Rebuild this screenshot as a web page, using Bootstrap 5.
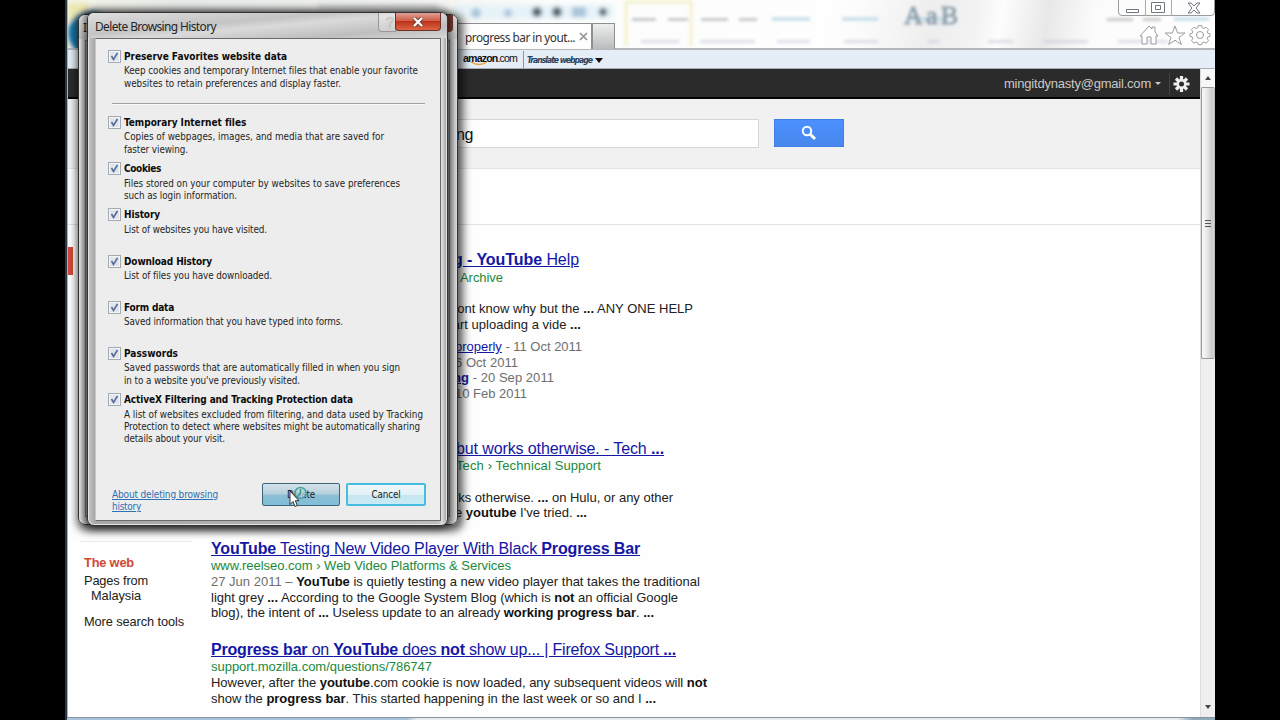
<!DOCTYPE html>
<html lang="en">
<head>
<meta charset="utf-8">
<title>Delete Browsing History</title>
<meta name="viewport" content="width=device-width, initial-scale=1">
<link href="https://cdn.jsdelivr.net/npm/bootstrap@5.3.0/dist/css/bootstrap.min.css" rel="stylesheet">
<style>
body{background:#000;height:720px;overflow:hidden;font-family:"Liberation Sans",Arial,sans-serif;color:#222}
.win{width:1150px;height:720px;background:#fdfefd;border-left:3px solid #9cb4cc}
.win::before{content:"";position:absolute;left:-3px;top:0;width:2px;height:720px;background:#263746}
.glass{height:50px;background:linear-gradient(100deg,#f5f5ea 0,#e8ecea 10%,#f2f2f0 28%,#fbfcfb 42%,#fdfefd 66%,#fbfbfb 69%,#eee 75%,#f3f3f3 79%,#fdfdfd 81%,#e8e8e8 85%,#fbfbfb 89%,#fff 100%);border-bottom:2px solid #b5b9bc}
.glass .haze{left:0;top:0}
.tab{left:385px;top:23px;height:26px;width:139px;background:#fdfefd;border:1px solid #8c8f92;border-bottom:0;font:11.8px "Noto Sans","Open Sans",sans-serif;color:#333;padding-left:11px;white-space:nowrap}
.newtab{left:524px;top:23px;width:23px;height:26px;background:linear-gradient(#eee,#b9bcbd);border:1px solid #8c8f92;border-bottom:0}
.ctl{left:1050px;top:-3px;width:97px;height:19px;border:1px solid #9b9b9b;border-radius:0 0 4px 4px}
.tools{left:1070px;top:23px}
.favs{height:19px;background:#e5edf7;border-bottom:1px solid #a9afb6;color:#111}
.favs .sep{left:455px;top:1px;width:1px;height:17px;background:#8e959d}
.favs .smile{left:402px;top:11px}
.amazon{left:395px;top:-1px;font-size:10.6px;line-height:18px}
.translate{left:459px;top:1px;font:italic bold 8.600px/18px "DejaVu Sans Condensed","Liberation Sans",sans-serif;color:#27415f}
.page-col{width:1132px}
.gbar{height:30px;background:#2b2b2b;border-bottom:2px solid #050505;color:#c9c9c9;font-size:13px}
.gbar .mail{margin:2px 0 0 936px}
.gbar svg{margin-top:2px}
.search{height:70px;background:#f1f1f1;border-bottom:1px solid #e4e4e4}
.query{width:440px;height:29px;margin:20px 0 0 251px;border:1px solid #d6d6d6;background:#fdfefd;padding-left:136px;font-size:16px;line-height:29px;color:#111}
.go{width:70px;height:28px;margin:20px 0 0 15px;background:linear-gradient(#4d90fe,#4787ed);border:1px solid #3f80e6}
.strip{height:56px;border-bottom:1px solid #e3e3e3}
.side{width:143px;padding-left:16px;font-size:12.8px;line-height:15px;position:relative}
.side .mark-red{left:0;top:22px;width:5px;height:28px;background:#d14836}
.side .rule{height:1px;width:112px;margin:316px 0 0 -4px;background:#ebebeb}
.side .here{color:#d14836;margin-top:13px;margin-bottom:3px}
.side .more{margin-top:11px}
.results{padding-top:25px;font-size:13px}
.results .ln{display:block;white-space:nowrap;line-height:15.6px;height:15.6px;position:relative;top:-1.500px}
.results .ttl{font-size:16px;line-height:20px;height:20px;top:.2px}
.results .ttl>span{display:inline-block}
.results .ttl>span,.results .lnk{color:#1417a5;text-decoration:underline}
.results .url{color:#1b8a3c;line-height:17px;height:17px}
.results b{color:#111}.results .ttl b,.results .lnk b{color:inherit}
.results .gap-top{margin-top:7px}
.dim{color:#6f6f6f}
.r1{min-height:188.5px;padding-left:237px}.r2{min-height:100px;padding-left:243px}.r3{min-height:101px}
.in1{margin-left:1px}.in2{margin-left:2px}.in5{margin-left:5px}.in7{margin-left:7px}.in12{margin-left:12px}
.scroll{width:15px;background:#efefef;border-left:1px solid #ddd}
.scroll .up{height:18px;background:#f7f7f7}
.scroll .down{height:19px;line-height:10px}
.scroll .thumb{height:272px;flex:0 0 272px;border:1px solid #9a9a9a;border-right-color:#bbb;border-radius:2px;background:linear-gradient(90deg,#f8f8f8,#ececec 35%,#cacaca 85%,#d8d8d8)}
.foot{left:-1px;bottom:0;width:1148px;height:3px;border-top:1px solid #8a939c;background:linear-gradient(90deg,#a9c3de 0,#a9c3de 340px,#e8ecef 350px,#e8ecef 1110px,#8faabd 1125px)}
/* stacked dialogs */
.dlg{border:1px solid #333;border-radius:7px}
.dlg-back{left:78px;top:14px;width:380px;height:511px;background:linear-gradient(90deg,#eee 0,#b9b9b9 7px,#8c8c8c 11px,#aaa 355px,#777 366px,#bbb 371px,#e4e4e4);box-shadow:2px 3px 9px 3px rgba(0,0,0,.65)}
.dlg-back .head{height:24px;background:linear-gradient(#e8e8e8,#c7c7c7);border-radius:6px 6px 0 0;font:12px/25px "Noto Sans",sans-serif;padding-left:4px}
.dlg-back .inner{left:6px;top:25px;width:365px;height:477px;border:1px solid #777}
.dlg-back .xback{right:4px;top:0;width:12px;height:17px;background:#7e3c33;border-radius:0 0 4px 0}
.dlg-front{left:87px;top:12px;width:361px;height:514px;background:linear-gradient(90deg,#c8c8c8,#a6a6a6 7px,#bcbcbc 350px,#ddd 354px,#999);box-shadow:0 0 8px 2px rgba(0,0,0,.7),inset 0 0 0 1px #e3e3e3}
.dlg-front .head{height:25px;border-radius:6px 6px 0 0;background:linear-gradient(175deg,#dedede,#c4c4c4 38%,#dadada 52%,#bebebe 78%,#d6d6d6);font:11.9px/26px "Noto Sans",sans-serif;color:#252525;padding-left:7px}
.xbtn{left:307px;top:0;width:46px;height:18px;border:1px solid #6e3028;border-top:0;border-radius:0 0 4px 4px;background:linear-gradient(#e0a095,#cf5c48 45%,#bb321a 50%,#dc6542)}
.help{left:290px;top:0;width:18px;height:19px;border:1px solid #999;border-top:0;border-radius:0 0 0 4px;color:#eee;-webkit-text-stroke:.5px #aaa;font-size:14px;line-height:18px;background:rgba(255,255,255,.25);padding-left:7px}
.pane{left:7px;top:25px;width:346px;height:483px;background:#ededed;border:1px solid #6b6b6b;border-left-color:#c8c8c8;font-family:"DejaVu Sans Condensed","DejaVu Sans",sans-serif;font-size:9.8px;color:#252525;padding:11px 0 0 12px}
.opt{height:46.2px;line-height:12.4px;padding-left:16px;position:relative;white-space:nowrap}
.opt.first{height:66px}
.opt strong{display:block;line-height:14px;height:15.4px;color:#0c0c0c;font-size:10px}
.opt span{display:block}
.box{left:0;top:0;width:13px;height:13px;background:#dfe5ec;border:1px solid #a5aab2;box-shadow:inset 0 0 0 1px #f3f5f7}
.box svg{display:block}
.cut{left:4px;top:53px;width:313px;height:1px;background:#a2a2a2;border-bottom:1px solid #fafafa;box-sizing:content-box}
.about{left:16px;top:450px;line-height:12.4px;font-size:10px;color:#2d70b3;white-space:nowrap}
.about span{display:block;text-decoration:underline}
.dbtn{top:444px;width:78px;height:23px;border-radius:2px;font-size:9.8px;line-height:21px;text-align:center;color:#1d1d1d}
.ok{left:166px;border:1px solid #3d6478;background:linear-gradient(#d5e3ea,#b4cfdd 48%,#8ebed3 52%,#7fbed9)}
.no{left:250px;width:80px;border:2px solid #45bce0;background:linear-gradient(#eef7fa,#e2f1f6 50%,#c7e5ef 52%,#c9ebf5);line-height:20px}
.pointer{left:288px;top:484px}
</style>
</head>
<body>
<main class="win position-relative mx-auto d-flex flex-column">
  <header class="glass position-relative flex-shrink-0">
    <svg class="haze position-absolute" width="1147" height="48">
      <defs><filter id="soft"><feGaussianBlur stdDeviation="2.3"/></filter><filter id="soft1"><feGaussianBlur stdDeviation="1.5"/></filter></defs>
      <g filter="url(#soft)">
        <path d="M0 22V3h20v12z" fill="#ece8b2"/><circle cx="22" cy="33" r="22" fill="#1672a4"/>
        <path d="M250 4h120v5H250z" fill="#d4d8d8"/><path d="M385 5h160v14H385z" fill="#e6f3f8"/>
        <g fill="#a9c4dc"><circle cx="408" cy="13" r="5"/><circle cx="440" cy="13" r="4"/><path d="M504 7h14v10h-14z"/></g>
        <g fill="#4f5d6b"><circle cx="469" cy="12" r="5"/><circle cx="489" cy="12" r="5"/><circle cx="535" cy="12" r="4"/></g>
      </g>
      <path d="M558 46V2h65v44" fill="none" stroke="#f4efc4" stroke-width="2.500" filter="url(#soft1)"/>
      <g filter="url(#soft1)">
        <g fill="#a7a8ab" opacity=".6"><path d="M564 18h24v3h-24zM600 18h20v3h-20zM633 18h27v3h-27zM671 18h18v3h-18zM1039 18h26v3h-26zM1075 18h18v3h-18z"/></g>
        <g fill="#a5cddc" opacity=".55"><path d="M704 17h38v4h-38zM774 17h36v4h-36zM842 17h36v4h-36zM1106 17h35v4h-35z"/></g>
        <g fill="#c4c1db" opacity=".5"><path d="M573 40h38v3h-38zM632 40h55v3h-55zM709 40h33v3h-33zM776 40h34v3h-34zM860 40h11v3h-11zM920 40h25v3h-25zM976 40h44v3h-44zM1050 40h50v3h-50z"/></g>
      </g>
      <text x="836" y="24" font-family="Liberation Serif" font-size="26" fill="#8fa0ae" textLength="54" filter="url(#soft1)" stroke="#8fa0ae" stroke-width="1">AaB</text>
    </svg>
    <div class="tab position-absolute d-flex align-items-center"><span data-w="110">progress bar in yout...</span>
      <svg class="ms-1 flex-shrink-0" width="10" height="10" stroke="#929292" stroke-width="1.700"><path d="M1 1l7 7M8 1L1 8"/></svg></div>
    <div class="newtab position-absolute"></div>
    <div class="ctl position-absolute"><svg class="d-block" width="95" height="18" fill="#fff" stroke="#707681"><path d="M26.500 0v18M52.500 0v18" stroke="#aaa"/><path d="M7.500 11.500h12v3h-12zM32.500 4.500h13v10h-13zM36.500 7.500h5v4h-5z"/><path d="M69 5h3l3 3 3-3h3l-4 5 4 5h-3l-3-3-3 3h-3l4-5z"/></svg></div>
    <svg class="tools position-absolute" width="74" height="24" fill="#fff" stroke="#9b9b9b"><path d="M2 13l9-10 3 3V4h3v5l3 4h-2v8h-5v-7h-4v7H4v-8z"/><path d="M37 3l2.600 7h7.400l-6 4.500 2.300 7-6.300-4.300-6.300 4.300 2.300-7L27 10h7.400z"/>
      <g transform="translate(62 12)"><path d="M-1.800-9.500h3.600l.6 2.400 1.500.6 2.100-1.300L8.500-5.300 7.200-3.200l.6 1.400 2.200.6v2.600l-2.200.6-.6 1.500 1.300 2.100L6 8.200 3.900 6.900l-1.500.6-.6 2.200h-3.600l-.6-2.200-1.500-.6L-6 8.200-8.500 5.600-7.200 3.500-7.800 2-10 1.400v-2.600l2.200-.6.6-1.400-1.300-2.100L-6-7.800l2.100 1.300 1.500-.6z"/><circle r="3.500"/></g></svg>
  </header>
  <nav class="favs position-relative flex-shrink-0">
    <span class="amazon position-absolute text-nowrap"><span data-w="54"><b>amazon</b>.com</span></span>
    <svg class="smile position-absolute" width="20" height="6" fill="none" stroke="#e7a13c" stroke-width="1.300"><path d="M1 1q8 5 16 0"/></svg>
    <span class="sep position-absolute"></span>
    <span class="translate position-absolute text-nowrap"><span data-w="65">Translate webpage</span> <svg width="8" height="5" fill="#111"><path d="M0 0h8L4 5z"/></svg></span>
  </nav>
  <div class="d-flex flex-grow-1 overflow-hidden">
    <section class="page-col d-flex flex-column">
      <div class="gbar d-flex align-items-center flex-shrink-0"><span class="mail text-nowrap" data-w="147">mingitdynasty@gmail.com</span>
        <svg class="ms-1" width="6" height="4" fill="#ccc"><path d="M0 0h6L3 3z"/></svg>
        <svg class="ms-1" width="30" height="28"><path d="M4.500 3v22" stroke="#444"/><g transform="translate(16.500 14)"><g stroke="#eee" stroke-width="3.200"><path d="M0-8V8M-8 0H8M-5.500-5.500l11 11M5.500-5.500l-11 11"/></g><circle r="5" fill="#eee"/><circle r="2.500" fill="#2b2b2b"/></g></svg></div>
      <div class="search d-flex flex-shrink-0"><div class="query"><span data-w="17">ng</span></div><div class="go d-flex align-items-center justify-content-center"><svg width="16" height="16" fill="none" stroke="#fff"><circle cx="6" cy="6" r="4.200" stroke-width="2"/><path d="M9 9l5 5" stroke-width="3"/></svg></div></div>
      <div class="strip flex-shrink-0"></div>
      <div class="d-flex">
        <aside class="side text-nowrap"><span class="mark-red position-absolute"></span>
          <div class="rule"></div>
          <div class="here"><b data-w="50">The web</b></div>
          <div><span data-w="64">Pages from</span></div>
          <div class="in7"><span data-w="50">Malaysia</span></div>
          <div class="more"><span data-w="100">More search tools</span></div>
        </aside>
        <div class="results">
          <article class="r1">
            <div class="ln ttl in5"><span data-w="126"><b>g - YouTube</b> Help</span></div>
            <div class="ln url in12"><span data-w="43">Archive</span></div>
            <div class="ln"></div>
            <div class="ln in2"><span data-w="243">dont know why but the <b>...</b> ANY ONE HELP</span></div>
            <div class="ln in1"><span data-w="132">tart uploading a vide <b>...</b></span></div>
            <div class="ln dim in7 gap-top"><span data-w="127"><span class="lnk">properly</span> - 11 Oct 2011</span></div>
            <div class="ln dim in7"><span data-w="63">6 Oct 2011</span></div>
            <div class="ln dim in5"><span data-w="101"><span class="lnk"><b>ng</b></span> - 20 Sep 2011</span></div>
            <div class="ln dim in7"><span data-w="72">10 Feb 2011</span></div>
          </article>
          <article class="r2">
            <div class="ln ttl in2"><span data-w="208">but works otherwise. - Tech <b>...</b></span></div>
            <div class="ln url in2"><span data-w="145">Tech › Technical Support</span></div>
            <div class="ln"></div>
            <div class="ln"><span data-w="219">rks otherwise. <b>...</b> on Hulu, or any other</span></div>
            <div class="ln in1"><span data-w="132">e <b>youtube</b> I've tried. <b>...</b></span></div>
          </article>
          <article class="r3">
            <div class="ln ttl"><span data-w="429"><b>YouTube</b> Testing New Video Player With Black <b>Progress Bar</b></span></div>
            <div class="ln url"><span data-w="300">www.reelseo.com › Web Video Platforms &amp; Services</span></div>
            <div class="ln"><span data-w="489"><span class="dim">27 Jun 2011 –</span> <b>YouTube</b> is quietly testing a new video player that takes the traditional</span></div>
            <div class="ln"><span data-w="467">light grey <b>...</b> According to the Google System Blog (which is <b>not</b> an official Google</span></div>
            <div class="ln"><span data-w="443">blog), the intent of <b>...</b> Useless update to an already <b>working progress bar</b>. <b>...</b></span></div>
          </article>
          <article>
            <div class="ln ttl"><span data-w="465"><b>Progress bar</b> on <b>YouTube</b> does <b>not</b> show up... | Firefox Support <b>...</b></span></div>
            <div class="ln url"><span data-w="221">support.mozilla.com/questions/786747</span></div>
            <div class="ln"><span data-w="496">However, after the <b>youtube</b>.com cookie is now loaded, any subsequent videos will <b>not</b></span></div>
            <div class="ln"><span data-w="445">show the <b>progress bar</b>. This started happening in the last week or so and I <b>...</b></span></div>
          </article>
        </div>
      </div>
    </section>
    <div class="scroll d-flex flex-column"><div class="up d-flex align-items-center justify-content-center flex-shrink-0"><svg width="6" height="4" fill="#444"><path d="M0 4h6L3 0z"/></svg></div>
      <div class="thumb d-flex align-items-center justify-content-center"><svg width="6" height="7" stroke="#555"><path d="M0 .5h6M0 3.500h6M0 6.500h6"/></svg></div>
      <div class="down mt-auto text-center"><svg width="6" height="4" fill="#444"><path d="M0 0h6L3 4z"/></svg></div></div>
  </div>
  <div class="foot position-absolute"></div>
</main>

<div class="dlg dlg-back position-absolute"><div class="head">In</div><div class="xback position-absolute"></div><div class="inner position-absolute"></div></div>
<div class="dlg dlg-front position-absolute">
  <div class="head"><span data-w="121">Delete Browsing History</span></div>
  <div class="help position-absolute">?</div>
  <div class="xbtn position-absolute d-flex justify-content-center align-items-center"><svg width="12" height="10"><path d="M2 1l8 8M10 1L2 9" stroke="#683d38" stroke-width="4"/><path d="M2 1l8 8M10 1L2 9" stroke="#fff" stroke-width="2.300"/></svg></div>
  <div class="pane position-absolute">
    <div class="opt first"><i class="box position-absolute"></i><strong><b data-w="163">Preserve Favorites website data</b></strong><span data-w="294">Keep cookies and temporary Internet files that enable your favorite</span><span data-w="217">websites to retain preferences and display faster.</span><div class="cut position-absolute"></div></div>
    <div class="opt"><i class="box position-absolute"></i><strong><b data-w="122">Temporary Internet files</b></strong><span data-w="260">Copies of webpages, images, and media that are saved for</span><span data-w="64">faster viewing.</span></div>
    <div class="opt"><i class="box position-absolute"></i><strong><b data-w="37">Cookies</b></strong><span data-w="276">Files stored on your computer by websites to save preferences</span><span data-w="113">such as login information.</span></div>
    <div class="opt"><i class="box position-absolute"></i><strong><b data-w="36">History</b></strong><span data-w="143">List of websites you have visited.</span></div>
    <div class="opt"><i class="box position-absolute"></i><strong><b data-w="88">Download History</b></strong><span data-w="148">List of files you have downloaded.</span></div>
    <div class="opt"><i class="box position-absolute"></i><strong><b data-w="50">Form data</b></strong><span data-w="219">Saved information that you have typed into forms.</span></div>
    <div class="opt"><i class="box position-absolute"></i><strong><b data-w="54">Passwords</b></strong><span data-w="276">Saved passwords that are automatically filled in when you sign</span><span data-w="176">in to a website you've previously visited.</span></div>
    <div class="opt"><i class="box position-absolute"></i><strong><b data-w="229">ActiveX Filtering and Tracking Protection data</b></strong><span data-w="299">A list of websites excluded from filtering, and data used by Tracking</span><span data-w="296">Protection to detect where websites might be automatically sharing</span><span data-w="101">details about your visit.</span></div>
    <a class="about position-absolute"><span data-w="106">About deleting browsing</span><span data-w="29">history</span></a>
    <div class="dbtn ok position-absolute"><span data-w="28">Delete</span></div>
    <div class="dbtn no position-absolute"><span data-w="29">Cancel</span></div>
  </div>
</div>
<svg class="pointer position-absolute" width="24" height="26"><circle cx="12.500" cy="9" r="5.500" fill="#b9dbe5" fill-opacity=".75" stroke="#4a9da2" stroke-width="1.500"/><path d="M12.500 5v4l-3 4" stroke="#3c9b7c" stroke-width="1.500" fill="none"/><path d="M2 7v13.500l3-3 2 5 2.300-1-2-4.800H11z" fill="#fff" stroke="#222" stroke-width=".9"/></svg>
<script>
// Draw the check marks and set each line's tracking to its measured width.
document.querySelectorAll('.box').forEach(b => b.innerHTML = '<svg width="11" height="11" fill="none" stroke="#5b6b94" stroke-width="1.6"><path d="M2.500 5l2 3.500L8.500 2"/></svg>');
document.querySelectorAll('[data-w]').forEach(e => {
  e.style.whiteSpace = 'nowrap';
  const r = document.createRange();
  r.setStartBefore(e.firstChild); r.setEndAfter(e.lastChild);
  const d = e.style.display; e.style.display = 'inline-block';
  const gap = (e.dataset.w - e.getBoundingClientRect().width) / e.textContent.length;
  e.style.display = d;
  e.style.letterSpacing = gap.toFixed(3) + 'px';
});
</script>
<script src="https://cdn.jsdelivr.net/npm/bootstrap@5.3.0/dist/js/bootstrap.bundle.min.js"></script>
</body>
</html>
